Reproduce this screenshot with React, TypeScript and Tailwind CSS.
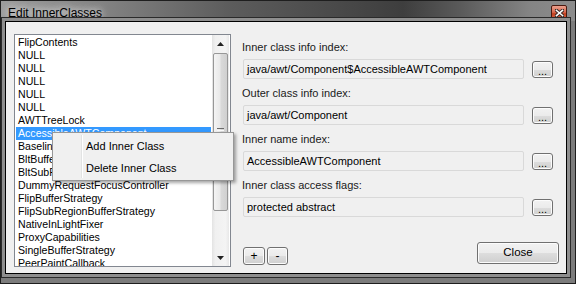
import type { ReactNode } from 'react'

const items = [
  'FlipContents',
  'NULL',
  'NULL',
  'NULL',
  'NULL',
  'NULL',
  'AWTTreeLock',
  'AccessibleAWTComponent',
  'BaselineResizeBehavior',
  'BltBufferStrategy',
  'BltSubRegionBufferStrategy',
  'DummyRequestFocusController',
  'FlipBufferStrategy',
  'FlipSubRegionBufferStrategy',
  'NativeInLightFixer',
  'ProxyCapabilities',
  'SingleBufferStrategy',
  'PeerPaintCallback',
]

const fields = [
  ['Inner class info index:', 'java/awt/Component$AccessibleAWTComponent'],
  ['Outer class info index:', 'java/awt/Component'],
  ['Inner name index:', 'AccessibleAWTComponent'],
  ['Inner class access flags:', 'protected abstract'],
]

function WinButton({ className, children }: { className: string; children: ReactNode }) {
  return (
    <div
      className={`flex items-center justify-center rounded-[3px] border border-[#707070] bg-[linear-gradient(to_bottom,#f2f2f2_0%,#ebebeb_50%,#dddddd_51%,#cfcfcf_100%)] text-black shadow-[inset_0_0_0_1px_#fcfcfc] ${className}`}
    >
      {children}
    </div>
  )
}

function ScrollBar() {
  return (
    <div className="flex w-[17px] flex-col bg-[linear-gradient(to_right,#e3e3e3,#f0f0f0_20%,#f4f4f4_80%,#e8e8e8)]">
      <div className="flex h-[18px] items-center justify-center">
        <svg width="7" height="4" viewBox="0 0 7 4">
          <path d="M0 4 L3.5 0 L7 4 Z" fill="#222" />
        </svg>
      </div>
      <div className="mx-[1px] flex h-[158px] items-center justify-center rounded-[2px] border border-[#979797] bg-[linear-gradient(to_right,#f4f4f4,#e9e9e9_45%,#d9d9d9_55%,#d0d0d0)]">
        <div className="flex w-[7px] flex-col gap-[1px]">
          <div className="h-px bg-[#6a6a6a]" />
          <div className="h-px bg-[#fafafa]" />
          <div className="h-px bg-[#6a6a6a]" />
          <div className="h-px bg-[#fafafa]" />
          <div className="h-px bg-[#6a6a6a]" />
        </div>
      </div>
      <div className="flex-1" />
      <div className="flex h-[17px] items-center justify-center">
        <svg width="7" height="4" viewBox="0 0 7 4">
          <path d="M0 0 L3.5 4 L7 0 Z" fill="#222" />
        </svg>
      </div>
    </div>
  )
}

export default function App() {
  return (
    <div className="flex h-[284px] w-[576px] flex-col border border-[#1e1e1e] bg-[#7c7c7c] font-['Liberation_Sans',Arial,sans-serif] text-[11px] text-black">
      {/* title bar */}
      <div className="flex h-[20px] bg-[linear-gradient(90deg,#9c9c9c_0%,#828282_18%,#5c5c5c_40%,#3e3e3e_70%,#5a5a5a_80%,#848484_92%,#8c8c8c_100%)]">
        <div className="ml-[7px] mt-[5px] h-[15px] leading-[15px] text-[12px] [text-shadow:0_0_6px_#e8e8e8,0_0_10px_#d8d8d8]">
          Edit InnerClasses
        </div>
        <div className="flex-1" />
        <div className="mr-[8px] mt-[4px] flex h-[16px] w-[16px] items-center justify-center rounded-[2px] border border-[#4a1a10] bg-[linear-gradient(to_bottom,#eaa08e_0%,#d8684e_45%,#c2401f_55%,#d86a4c_100%)]">
          <svg width="9" height="8" viewBox="0 0 9 8">
            <path d="M1 1 L8 7 M8 1 L1 7" stroke="#3a2a26" strokeWidth="3.4" strokeLinecap="square" />
            <path d="M1.5 1.5 L7.5 6.5 M7.5 1.5 L1.5 6.5" stroke="#ffffff" strokeWidth="1.6" strokeLinecap="square" />
          </svg>
        </div>
      </div>

      {/* body */}
      <div className="flex flex-1 pb-[9px] pl-[4px] pr-[8px]">
        <div className="relative flex flex-1 border border-black bg-[#f0f0f0] pl-[8px] pt-[12px] shadow-[0_0_0_3px_#8e8e8e,0_0_0_4px_#2a2a2a]">
          {/* list box */}
          <div className="flex h-[233px] w-[217px] border border-[#828790] bg-white">
            <div className="w-[197px] overflow-hidden px-[1px] pt-[1px] text-[10.6px]">
              {items.map((item, i) => (
                <div
                  key={i}
                  className={`h-[13px] whitespace-nowrap pl-[2px] leading-[13px] ${i === 7 ? 'bg-[#3399ff] text-white' : ''}`}
                >
                  {item}
                </div>
              ))}
            </div>
            <ScrollBar />
          </div>

          {/* right column */}
          <div className="ml-[11px] flex w-[317px] flex-col pt-[6px] text-[#1a1a1a]">
            {fields.map(([label, value], i) => (
              <div key={label} className={i === 0 ? '' : 'mt-[7px]'}>
                <div className="h-[14px] leading-[14px]">{label}</div>
                <div className="mt-[5px] flex h-[20px] items-center gap-[8px]">
                  <div className="ml-[1px] h-[20px] w-[281px] rounded-[2px] border border-[#d9d9d9] bg-[#f0f0f0] pl-[3px] leading-[18px] text-black">
                    {value}
                  </div>
                  <WinButton className="h-[17px] w-[21px] items-end pb-[2px] leading-[8px]">...</WinButton>
                </div>
              </div>
            ))}
            <div className="mt-[25px] flex items-start">
              <WinButton className="ml-[1px] mt-[5px] h-[18px] w-[22px] text-[12px]">+</WinButton>
              <WinButton className="ml-[2px] mt-[5px] h-[18px] w-[21px] text-[12px]">-</WinButton>
              <div className="flex-1" />
              <WinButton className="h-[22px] w-[82px] text-[11.5px]">Close</WinButton>
            </div>
          </div>

          {/* context menu */}
          <div className="absolute left-[46px] top-[110px] h-[49px] w-[182px] border border-[#979797] bg-[#f0f0f0] py-[2px] shadow-[2px_2px_3px_rgba(0,0,0,0.35)]">
            <div className="absolute bottom-[2px] left-[28px] top-[2px] w-px bg-[#e2e3e3]" />
            <div className="absolute bottom-[2px] left-[29px] top-[2px] w-px bg-white" />
            <div className="h-[22px] pl-[33px] leading-[22px]">Add Inner Class</div>
            <div className="h-[22px] pl-[33px] leading-[22px]">Delete Inner Class</div>
          </div>
        </div>
      </div>
    </div>
  )
}
